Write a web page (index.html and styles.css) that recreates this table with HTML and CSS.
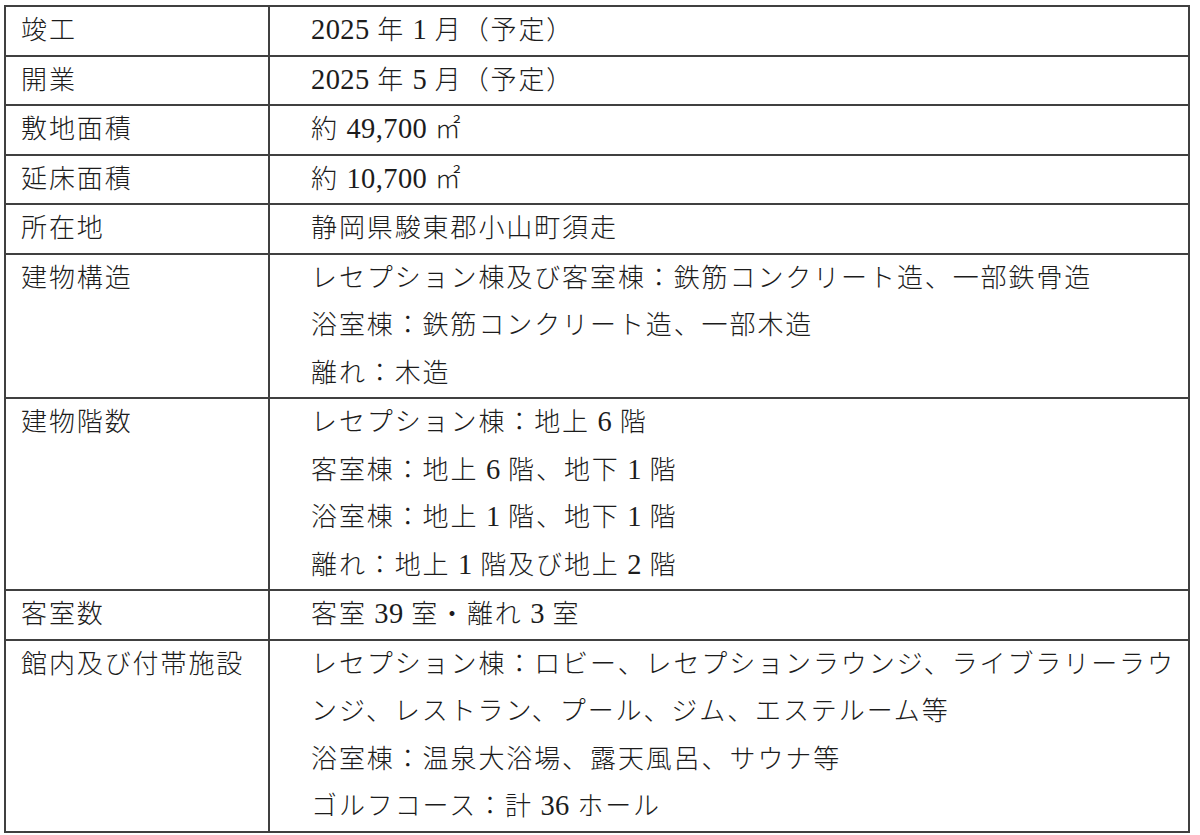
FILE: index.html
```html
<!DOCTYPE html>
<html lang="ja">
<head>
<meta charset="utf-8">
<title>概要</title>
<link rel="stylesheet" href="styles.css">
</head>
<body>
<table class="spec">
  <colgroup><col class="col-label"><col class="col-value"></colgroup>
  <tr><th>竣工</th><td><span class="num">2025 </span>年<span class="num"> 1 </span>月（予定）</td></tr>
  <tr><th>開業</th><td><span class="num">2025 </span>年<span class="num"> 5 </span>月（予定）</td></tr>
  <tr><th>敷地面積</th><td>約<span class="num"> 49,700 </span>㎡</td></tr>
  <tr><th>延床面積</th><td>約<span class="num"> 10,700 </span>㎡</td></tr>
  <tr><th>所在地</th><td>静岡県駿東郡小山町須走</td></tr>
  <tr><th>建物構造</th><td>レセプション棟及び客室棟：鉄筋コンクリート造、一部鉄骨造<br>浴室棟：鉄筋コンクリート造、一部木造<br>離れ：木造</td></tr>
  <tr><th>建物階数</th><td>レセプション棟：地上<span class="num"> 6 </span>階<br>客室棟：地上<span class="num"> 6 </span>階、地下<span class="num"> 1 </span>階<br>浴室棟：地上<span class="num"> 1 </span>階、地下<span class="num"> 1 </span>階<br>離れ：地上<span class="num"> 1 </span>階及び地上<span class="num"> 2 </span>階</td></tr>
  <tr><th>客室数</th><td>客室<span class="num"> 39 </span>室・離れ<span class="num"> 3 </span>室</td></tr>
  <tr><th>館内及び付帯施設</th><td>レセプション棟：ロビー、レセプションラウンジ、ライブラリーラウ<br>ンジ、レストラン、プール、ジム、エステルーム等<br>浴室棟：温泉大浴場、露天風呂、サウナ等<br>ゴルフコース：計<span class="num"> 36 </span>ホール</td></tr>
</table>
</body>
</html>
```

FILE: styles.css
```css
html, body {
  margin: 0;
  padding: 0;
  background: #ffffff;
}

.spec {
  margin: 5px 0 0 4px;
  border-collapse: collapse;
  width: 1186px;
  table-layout: fixed;
  font-family: "Liberation Serif", "Noto Sans CJK JP", serif;
  font-size: 26px;
  font-weight: 300;
  letter-spacing: 1.9px;
  color: #1c1c1c;
  line-height: 47.5px;
}

.col-label { width: 264px; }

.spec th,
.spec td {
  border: 2px solid #404040;
  vertical-align: top;
  text-align: left;
  font-weight: 300;
  white-space: nowrap;
  padding: 0;
}

.spec th {
  padding-left: 15px;
}

.spec td {
  padding-left: 41px;
}

.num {
  font-family: "Liberation Serif", serif;
  font-size: 28.5px;
  font-weight: 400;
  letter-spacing: 0.4px;
  line-height: 1;
}
```
